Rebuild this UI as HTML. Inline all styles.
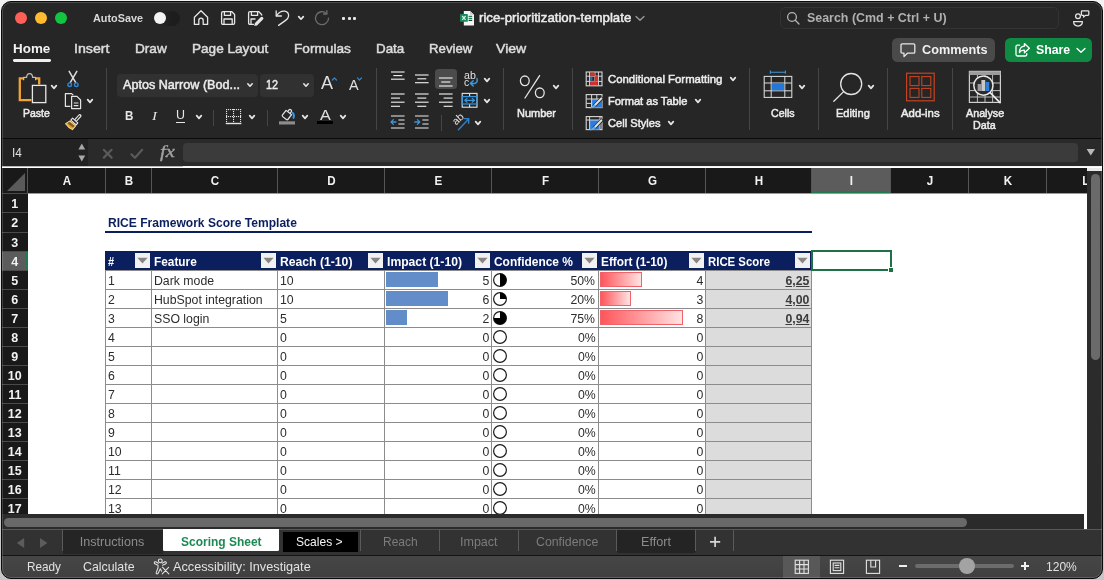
<!DOCTYPE html>
<html><head><meta charset="utf-8"><title>rice-prioritization-template</title>
<style>
*{box-sizing:border-box;margin:0;padding:0}
html,body{width:1104px;height:580px;overflow:hidden;background:linear-gradient(#f3f3f3,#c6c6c6);font-family:"Liberation Sans",sans-serif;}
#win{position:absolute;left:1px;top:1px;width:1102px;height:578px;border-radius:10px;background:#262626;overflow:hidden;border:1px solid #0a0a0a;}
#win:after{content:'';position:absolute;left:0;top:0;right:0;bottom:0;border-radius:9px;box-shadow:inset 0 0 0 1px rgba(255,255,255,.17);pointer-events:none}
#pg{position:absolute;left:-2px;top:-2px;width:1104px;height:580px;will-change:transform}
.abs{position:absolute}
.t{position:absolute;white-space:nowrap;color:#e9e9e9;line-height:1}
.ch{font-size:12.5px;font-weight:bold;margin-top:0.8px;margin-left:0.6px;transform:scaleX(.93);text-align:center;color:#f2f2f2}
.rh{left:2px;width:25.5px;text-align:center;font-size:12.5px;font-weight:bold;color:#f2f2f2}
.cell{font-size:13px;color:#2c2c2c;transform:scaleX(.945);transform-origin:0 50%}
.cell.r{transform-origin:100% 50%}
.cell.hd{color:#fff;font-weight:bold;transform:scaleX(.89)}
.fb{width:15px;height:14.5px;background:#f1f1f1}
.gl{background:#8c8c8c}
</style></head><body>
<div id="win"><div id="pg">
<div class="abs" style="left:15px;top:12px;width:12.4px;height:12.4px;border-radius:50%;background:#fe5f57"></div>
<div class="abs" style="left:35px;top:12px;width:12.4px;height:12.4px;border-radius:50%;background:#febc2e"></div>
<div class="abs" style="left:55px;top:12px;width:12.4px;height:12.4px;border-radius:50%;background:#12c440"></div>
<div class="t" style="left:93.0px;top:12.9px;font-size:11.5px;color:#d8d8d8;font-weight:bold;transform:scaleX(0.943);transform-origin:0 50%;">AutoSave</div>
<div class="abs" style="left:152.5px;top:11px;width:27px;height:14.5px;border-radius:8px;background:linear-gradient(90deg,rgba(28,28,28,0) 25%,#1d1d1d 75%)"></div>
<div class="abs" style="left:153.6px;top:12.1px;width:12.3px;height:12.3px;border-radius:50%;background:#f4f4f4"></div>
<svg class="abs" style="left:192px;top:8px" width="18" height="19" viewBox="0 0 18 19" fill="none" stroke="#e6e6e6" stroke-width="1.3" stroke-linejoin="round" stroke-linecap="round"><path d="M2.4,9.2 L9,2.8 L15.6,9.2 V16.4 H11.2 V12.4 Q11.2,10.2 9,10.2 Q6.8,10.2 6.8,12.4 V16.4 H2.4 Z"/></svg>
<svg class="abs" style="left:219px;top:8px" width="18" height="19" viewBox="0 0 18 19" fill="none" stroke="#e6e6e6" stroke-width="1.3" stroke-linejoin="round"><path d="M2.6,5 Q2.6,3.6 4,3.6 H12.6 L15.6,6.4 V15 Q15.6,16.4 14.2,16.4 H4 Q2.6,16.4 2.6,15 Z"/><path d="M5.4,3.8 V7.4 H11.6 V3.8"/><path d="M5,16.2 V11 H13.2 V16.2"/></svg>
<svg class="abs" style="left:246px;top:8px" width="19" height="19" viewBox="0 0 19 19" fill="none" stroke="#e6e6e6" stroke-width="1.3" stroke-linejoin="round"><path d="M8,16.4 H4 Q2.6,16.4 2.6,15 V5 Q2.6,3.6 4,3.6 H12.6 L15.6,6.4 V8"/><path d="M5.4,3.8 V7.4 H11.6 V3.8"/><path d="M5,16.2 V11 H9.5"/><path d="M10.6,15.6 L15.8,10.4" stroke="#262626" stroke-width="5.4" stroke-linecap="round"/><path d="M10.6,15.6 L15.8,10.4" stroke="#e6e6e6" stroke-width="3.2" stroke-linecap="round"/><path d="M8.2,18 L9,14.8 L11.4,17.2 Z" fill="#e6e6e6" stroke="none"/></svg>
<svg class="abs" style="left:273px;top:8px" width="19" height="19" viewBox="0 0 19 19" fill="none" stroke="#e6e6e6" stroke-width="1.3" stroke-linecap="round" stroke-linejoin="round"><path d="M3.2,3 V8 H8.4"/><path d="M3.4,7.8 Q7,2.6 11.8,3.2 Q15.8,4 15.6,8 Q15.4,10.4 12.6,12.4 L5.6,17.4"/></svg>
<svg class="abs" style="left:295.9px;top:14.4px" width="10" height="8" viewBox="0 0 10 8" fill="none" stroke="#e6e6e6" stroke-width="1.7" stroke-linecap="round" stroke-linejoin="round"><path d="M2.7,2.6 L5,5.2 L7.3,2.6"/></svg>
<svg class="abs" style="left:313px;top:9px" width="19" height="19" viewBox="0 0 19 19" fill="none" stroke="#6c6c6c" stroke-width="1.3" stroke-linecap="round" stroke-linejoin="round"><path d="M13.6,4.6 A6.5,6.5 0 1 0 15.5,9.2"/><path d="M13.9,1.6 V5 H10.5"/></svg>
<div class="abs" style="left:342.2px;top:16.7px;width:3px;height:3px;border-radius:1px;background:#e6e6e6"></div>
<div class="abs" style="left:347.5px;top:16.7px;width:3px;height:3px;border-radius:1px;background:#e6e6e6"></div>
<div class="abs" style="left:352.7px;top:16.7px;width:3px;height:3px;border-radius:1px;background:#e6e6e6"></div>
<svg class="abs" style="left:459px;top:10px" width="16" height="16" viewBox="0 0 16 16"><path d="M4.8,0.9 H11 L15,4.8 V15.4 H4.8 Z" fill="#f6f6f6"/><path d="M11,0.9 V4.8 H15 Z" fill="#cdcdcd"/><rect x="9.6" y="5.8" width="3.6" height="1.2" fill="#1a7d52"/><rect x="9.6" y="7.8" width="3.6" height="1.2" fill="#1a7d52"/><rect x="9.6" y="9.8" width="3.6" height="1.2" fill="#12402c"/><rect x="1" y="4" width="7.8" height="7.8" rx="0.6" fill="#17885a"/><path d="M3.2,6 L6.6,9.8 M6.6,6 L3.2,9.8" stroke="#d8f5e6" stroke-width="1.2"/></svg>
<div class="t" style="left:479.2px;top:10.8px;font-size:13px;color:#ececec;transform:scaleX(1.018);transform-origin:0 50%;-webkit-text-stroke:0.5px #ececec;">rice-prioritization-template</div>
<svg class="abs" style="left:634px;top:14px" width="12" height="9" viewBox="0 0 12 9" fill="none" stroke="#9a9a9a" stroke-width="1.4" stroke-linecap="round" stroke-linejoin="round"><path d="M2,2.6 L6,6.2 L10,2.6"/></svg>
<div class="abs" style="left:780.4px;top:7.4px;width:279px;height:22px;border-radius:5.5px;background:#272727;border:1px solid #343434"></div>
<svg class="abs" style="left:786px;top:10.5px" width="15" height="15" viewBox="0 0 15 15" fill="none" stroke="#b4b4b4" stroke-width="1.3" stroke-linecap="round"><circle cx="6" cy="6" r="4.4"/><path d="M9.3,9.3 L13,13"/></svg>
<div class="t" style="left:807.3px;top:12.4px;font-size:12px;color:#b0b0b0;font-weight:bold;transform:scaleX(1.036);transform-origin:0 50%;">Search (Cmd + Ctrl + U)</div>
<svg class="abs" style="left:1071px;top:9px" width="22" height="20" viewBox="0 0 22 20" fill="none" stroke="#e6e6e6" stroke-width="1.25" stroke-linejoin="round"><circle cx="7" cy="7.2" r="2.4"/><path d="M2.6,12.6 H11.4 Q11.4,17 7,17 Q2.6,17 2.6,12.6 Z"/><path d="M11.2,1.8 H17 Q17.8,1.8 17.8,2.6 V5.6 Q17.8,6.4 17,6.4 H14.4 L12.6,8 V6.4 H11.2 Q10.4,6.4 10.4,5.6 V2.6 Q10.4,1.8 11.2,1.8 Z"/></svg>
<div class="t" style="left:13.0px;top:41.6px;font-size:13.5px;color:#f2f2f2;font-weight:bold;transform:scaleX(0.994);transform-origin:0 50%;">Home</div>
<div class="t" style="left:74.0px;top:41.6px;font-size:13.5px;color:#dcdcdc;transform:scaleX(1.052);transform-origin:0 50%;-webkit-text-stroke:0.5px #dcdcdc;">Insert</div>
<div class="t" style="left:135.0px;top:41.6px;font-size:13.5px;color:#dcdcdc;transform:scaleX(1.009);transform-origin:0 50%;-webkit-text-stroke:0.5px #dcdcdc;">Draw</div>
<div class="t" style="left:191.5px;top:41.6px;font-size:13.5px;color:#dcdcdc;transform:scaleX(1.006);transform-origin:0 50%;-webkit-text-stroke:0.5px #dcdcdc;">Page Layout</div>
<div class="t" style="left:293.5px;top:41.6px;font-size:13.5px;color:#dcdcdc;transform:scaleX(1.010);transform-origin:0 50%;-webkit-text-stroke:0.5px #dcdcdc;">Formulas</div>
<div class="t" style="left:376.0px;top:41.6px;font-size:13.5px;color:#dcdcdc;transform:scaleX(0.992);transform-origin:0 50%;-webkit-text-stroke:0.5px #dcdcdc;">Data</div>
<div class="t" style="left:428.5px;top:41.6px;font-size:13.5px;color:#dcdcdc;transform:scaleX(0.978);transform-origin:0 50%;-webkit-text-stroke:0.5px #dcdcdc;">Review</div>
<div class="t" style="left:496.0px;top:41.6px;font-size:13.5px;color:#dcdcdc;transform:scaleX(1.044);transform-origin:0 50%;-webkit-text-stroke:0.5px #dcdcdc;">View</div>
<div class="abs" style="left:13px;top:59.2px;width:38px;height:2.8px;border-radius:1.4px;background:#f0f0f0"></div>
<div class="abs" style="left:892.2px;top:38px;width:102.8px;height:24px;border-radius:5.5px;background:#4a4a4a"></div>
<svg class="abs" style="left:899px;top:42px" width="18" height="17" viewBox="0 0 18 17" fill="none" stroke="#e6e6e6" stroke-width="1.3" stroke-linejoin="round"><path d="M3.2,1.8 H14.6 Q15.8,1.8 15.8,3 V10 Q15.8,11.2 14.6,11.2 H8.4 L5,14.6 V11.2 H3.2 Q2,11.2 2,10 V3 Q2,1.8 3.2,1.8 Z"/></svg>
<div class="t" style="left:922.0px;top:43.4px;font-size:13.5px;color:#f0f0f0;font-weight:bold;transform:scaleX(0.939);transform-origin:0 50%;">Comments</div>
<div class="abs" style="left:1005px;top:38px;width:87px;height:24px;border-radius:5.5px;background:#0f8a43"></div>
<svg class="abs" style="left:1013px;top:41px" width="19" height="18" viewBox="0 0 19 18" fill="none" stroke="#fff" stroke-width="1.3" stroke-linejoin="round" stroke-linecap="round"><path d="M6.6,4.2 H4.4 Q3,4.2 3,5.6 V13.6 Q3,15 4.4,15 H12.4 Q13.8,15 13.8,13.6 V12.6"/><path d="M11.4,2.6 L16.4,7.2 L11.4,11.8 V9.2 Q8,9 6.4,11.6 Q6.6,5.6 11.4,5.2 Z"/></svg>
<div class="t" style="left:1035.6px;top:43.4px;font-size:13.5px;color:#fff;font-weight:bold;transform:scaleX(0.912);transform-origin:0 50%;">Share</div>
<svg class="abs" style="left:1075px;top:46px" width="12" height="9" viewBox="0 0 12 9" fill="none" stroke="#fff" stroke-width="1.4" stroke-linecap="round" stroke-linejoin="round"><path d="M2,2.6 L6,6.2 L10,2.6"/></svg>
<svg class="abs" style="left:16px;top:70px" width="34" height="36" viewBox="0 0 34 36" fill="none" ><path d="M8.2,8.4 H3.8 V30.2 H15.4" stroke="#f0a338" stroke-width="2.3"/><path d="M19.4,8.4 H23.2 V14.6" stroke="#f0a338" stroke-width="2.3"/><path d="M7.6,10.2 V7.4 H10.6 Q10.8,3.6 13.6,3.6 Q16.4,3.6 16.6,7.4 H19.6 V10.2" stroke="#bdbdbd" stroke-width="1.2" stroke-linejoin="round"/><rect x="16.4" y="15.4" width="13.4" height="17.2" fill="#2b2b2b" stroke="#e8e8e8" stroke-width="1.3"/></svg>
<svg class="abs" style="left:48.1px;top:82.4px" width="12" height="10" viewBox="-6 -5 12 10" fill="none" stroke="#e4e4e4" stroke-width="1.75" stroke-linecap="round" stroke-linejoin="round"><path d="M-2.3,-1.35 L0,1.35 L2.3,-1.35"/></svg>
<div class="t" style="left:22.6px;top:107.7px;font-size:11px;color:#ececec;transform:scaleX(0.953);transform-origin:0 50%;-webkit-text-stroke:0.5px #ececec;">Paste</div>
<svg class="abs" style="left:64px;top:69px" width="18" height="20" viewBox="0 0 18 20" fill="none" ><path d="M5.2,2.4 L11.6,13.4 M12.8,2.4 L6.4,13.4" stroke="#dedede" stroke-width="1.5" stroke-linecap="round"/><circle cx="5.7" cy="15.7" r="1.8" stroke="#2f86d2" stroke-width="1.4"/><circle cx="12.3" cy="15.7" r="1.8" stroke="#2f86d2" stroke-width="1.4"/></svg>
<svg class="abs" style="left:63px;top:91px" width="20" height="20" viewBox="0 0 20 20" fill="none" ><path d="M7.4,15.4 H2.4 V2.6 H8.6 L10.2,4.2" stroke="#e4e4e4" stroke-width="1.2" stroke-linejoin="round"/><path d="M8.6,5.4 H14 L17.6,9 V17.6 H8.6 Z" stroke="#e4e4e4" stroke-width="1.2" stroke-linejoin="round" fill="#2b2b2b"/><path d="M10.8,12 H15.4 M10.8,14.6 H15.4" stroke="#e4e4e4" stroke-width="1.1"/></svg>
<svg class="abs" style="left:84px;top:96.4px" width="12" height="10" viewBox="-6 -5 12 10" fill="none" stroke="#e4e4e4" stroke-width="1.75" stroke-linecap="round" stroke-linejoin="round"><path d="M-2.3,-1.35 L0,1.35 L2.3,-1.35"/></svg>
<svg class="abs" style="left:63px;top:113px" width="20" height="18" viewBox="0 0 20 18" fill="none" ><path d="M12.8,7.2 L16.8,2.8" stroke="#ececec" stroke-width="3.4" stroke-linecap="round"/><path d="M12.9,7.1 L16.7,2.9" stroke="#2a2a2a" stroke-width="1.2" stroke-linecap="round"/><path d="M9.6,5.2 L14.8,9.8 L13.2,11.8 L7.8,7.2 Z" fill="#2a2a2a" stroke="#ececec" stroke-width="1.1" stroke-linejoin="round"/><path d="M7,8 L12.6,12.8 L9.4,16.6 Q5.4,14.6 2.6,10.6 Z" fill="#e39a2c" stroke="#f7d683" stroke-width="1.1" stroke-linejoin="round"/><path d="M6.6,8.8 L11.6,13 L10.2,14.4 Q7,12.6 4.4,9.9 Z" fill="#2a2a2a" opacity=".55"/></svg>
<div class="abs" style="left:106.0px;top:68px;width:1px;height:62px;background:#454545"></div>
<div class="abs" style="left:117px;top:73.5px;width:140.5px;height:23px;border-radius:4px;background:#313131"></div>
<div class="t" style="left:123.0px;top:78.0px;font-size:13px;color:#ececec;transform:scaleX(0.970);transform-origin:0 50%;-webkit-text-stroke:0.5px #ececec;">Aptos Narrow (Bod...</div>
<svg class="abs" style="left:244.3px;top:80.4px" width="12" height="10" viewBox="-6 -5 12 10" fill="none" stroke="#e4e4e4" stroke-width="1.6" stroke-linecap="round" stroke-linejoin="round"><path d="M-2.2,-1.25 L0,1.25 L2.2,-1.25"/></svg>
<div class="abs" style="left:260px;top:73.5px;width:54px;height:23px;border-radius:4px;background:#313131"></div>
<div class="t" style="left:266.0px;top:78.0px;font-size:13px;color:#ececec;transform:scaleX(0.830);transform-origin:0 50%;-webkit-text-stroke:0.5px #ececec;">12</div>
<svg class="abs" style="left:300.4px;top:80.4px" width="12" height="10" viewBox="-6 -5 12 10" fill="none" stroke="#e4e4e4" stroke-width="1.6" stroke-linecap="round" stroke-linejoin="round"><path d="M-2.2,-1.25 L0,1.25 L2.2,-1.25"/></svg>
<div class="t" style="left:320.6px;top:75.4px;font-size:17.5px;color:#e0e0e0;transform:scaleX(1.028);transform-origin:0 50%;">A</div>
<svg class="abs" style="left:330.6px;top:76.4px" width="8" height="6" viewBox="0 0 8 6" fill="none" ><path d="M1.4,4 L3.4,1.9 L5.4,4" stroke="#2f86d0" stroke-width="1.3" stroke-linecap="round" stroke-linejoin="round"/></svg>
<div class="t" style="left:348.6px;top:77.9px;font-size:14.5px;color:#e0e0e0;transform:scaleX(0.993);transform-origin:0 50%;">A</div>
<svg class="abs" style="left:356px;top:76.4px" width="8" height="6" viewBox="0 0 8 6" fill="none" ><path d="M1.4,1.9 L3.5,4 L5.6,1.9" stroke="#2f86d0" stroke-width="1.3" stroke-linecap="round" stroke-linejoin="round"/></svg>
<div class="t" style="left:125.0px;top:109.2px;font-size:13.5px;color:#e6e6e6;font-weight:bold;transform:scaleX(0.862);transform-origin:0 50%;">B</div>
<div class="t" style="left:152.4px;top:109.3px;font-size:13.5px;color:#e6e6e6;font-style:italic;font-family:'Liberation Serif',serif;transform:scaleX(1.112);transform-origin:0 50%;">I</div>
<div class="t" style="left:176.0px;top:109.0px;font-size:12.5px;color:#e6e6e6;transform:scaleX(0.997);transform-origin:0 50%;">U</div>
<div class="abs" style="left:176px;top:121.6px;width:9.4px;height:1.1px;background:#e6e6e6"></div>
<svg class="abs" style="left:193px;top:112.4px" width="12" height="10" viewBox="-6 -5 12 10" fill="none" stroke="#e4e4e4" stroke-width="1.75" stroke-linecap="round" stroke-linejoin="round"><path d="M-2.3,-1.35 L0,1.35 L2.3,-1.35"/></svg>
<div class="abs" style="left:213.1px;top:110px;width:1px;height:16px;background:#454545"></div>
<svg class="abs" style="left:225px;top:108px" width="18" height="18" viewBox="0 0 18 18" fill="none" ><g fill="#e4e4e4"><rect x="1" y="1" width="1.1" height="1.1"/><rect x="1" y="8" width="1.1" height="1.1"/><rect x="3" y="1" width="1.1" height="1.1"/><rect x="3" y="8" width="1.1" height="1.1"/><rect x="5" y="1" width="1.1" height="1.1"/><rect x="5" y="8" width="1.1" height="1.1"/><rect x="7" y="1" width="1.1" height="1.1"/><rect x="7" y="8" width="1.1" height="1.1"/><rect x="9" y="1" width="1.1" height="1.1"/><rect x="9" y="8" width="1.1" height="1.1"/><rect x="11" y="1" width="1.1" height="1.1"/><rect x="11" y="8" width="1.1" height="1.1"/><rect x="13" y="1" width="1.1" height="1.1"/><rect x="13" y="8" width="1.1" height="1.1"/><rect x="15" y="1" width="1.1" height="1.1"/><rect x="15" y="8" width="1.1" height="1.1"/><rect x="1" y="1" width="1.1" height="1.1"/><rect x="8" y="1" width="1.1" height="1.1"/><rect x="15" y="1" width="1.1" height="1.1"/><rect x="1" y="3" width="1.1" height="1.1"/><rect x="8" y="3" width="1.1" height="1.1"/><rect x="15" y="3" width="1.1" height="1.1"/><rect x="1" y="5" width="1.1" height="1.1"/><rect x="8" y="5" width="1.1" height="1.1"/><rect x="15" y="5" width="1.1" height="1.1"/><rect x="1" y="7" width="1.1" height="1.1"/><rect x="8" y="7" width="1.1" height="1.1"/><rect x="15" y="7" width="1.1" height="1.1"/><rect x="1" y="9" width="1.1" height="1.1"/><rect x="8" y="9" width="1.1" height="1.1"/><rect x="15" y="9" width="1.1" height="1.1"/><rect x="1" y="11" width="1.1" height="1.1"/><rect x="8" y="11" width="1.1" height="1.1"/><rect x="15" y="11" width="1.1" height="1.1"/><rect x="1" y="13" width="1.1" height="1.1"/><rect x="8" y="13" width="1.1" height="1.1"/><rect x="15" y="13" width="1.1" height="1.1"/><rect x="0.8" y="14.8" width="15.6" height="1.4"/></g></svg>
<svg class="abs" style="left:246px;top:112.4px" width="12" height="10" viewBox="-6 -5 12 10" fill="none" stroke="#e4e4e4" stroke-width="1.75" stroke-linecap="round" stroke-linejoin="round"><path d="M-2.3,-1.35 L0,1.35 L2.3,-1.35"/></svg>
<div class="abs" style="left:266.7px;top:110px;width:1px;height:16px;background:#454545"></div>
<svg class="abs" style="left:278px;top:107px" width="20" height="19" viewBox="0 0 20 19" fill="none" ><g transform="rotate(38 9.2 7.8)" stroke="#e4e4e4" stroke-width="1.25" stroke-linejoin="round"><path d="M5.6,5 H12.6 V10.8 Q12.6,12 11.4,12 H6.8 Q5.6,12 5.6,10.8 Z"/><path d="M7.6,5 V3.2 Q7.6,1.6 9.1,1.6 Q10.6,1.6 10.6,3.2 V5"/></g><path d="M14.6,5.6 Q17,8 15.4,11" stroke="#3a96dd" stroke-width="1.8" stroke-linecap="round"/><rect x="1" y="14.3" width="16" height="3.2" fill="#8c8c8c"/></svg>
<svg class="abs" style="left:299px;top:112.4px" width="12" height="10" viewBox="-6 -5 12 10" fill="none" stroke="#e4e4e4" stroke-width="1.75" stroke-linecap="round" stroke-linejoin="round"><path d="M-2.3,-1.35 L0,1.35 L2.3,-1.35"/></svg>
<div class="t" style="left:320.0px;top:107.3px;font-size:15px;color:#e0e0e0;transform:scaleX(1.079);transform-origin:0 50%;">A</div>
<div class="abs" style="left:317px;top:121.1px;width:15.9px;height:3.3px;background:#000"></div>
<svg class="abs" style="left:337px;top:112.4px" width="12" height="10" viewBox="-6 -5 12 10" fill="none" stroke="#e4e4e4" stroke-width="1.75" stroke-linecap="round" stroke-linejoin="round"><path d="M-2.3,-1.35 L0,1.35 L2.3,-1.35"/></svg>
<div class="abs" style="left:376.1px;top:68px;width:1px;height:62px;background:#454545"></div>
<div class="abs" style="left:435px;top:69px;width:22px;height:19.6px;border-radius:3.5px;background:#4b4b4b"></div>
<svg class="abs" style="left:390.3px;top:71.2px" width="15.6" height="12.8" viewBox="0 0 15.6 12.8" fill="none" ><path d="M1.0,1.0 h13.6" stroke="#ececec" stroke-width="1.15"/><path d="M3.3,4.6 h9" stroke="#ececec" stroke-width="1.15"/><path d="M1.0,8.2 h13.6" stroke="#ececec" stroke-width="1.15"/></svg>
<svg class="abs" style="left:414.2px;top:73.6px" width="15.6" height="13.55" viewBox="0 0 15.6 13.55" fill="none" ><path d="M1.0,1.0 h13.6" stroke="#ececec" stroke-width="1.15"/><path d="M3.3,4.8 h9" stroke="#ececec" stroke-width="1.15"/><path d="M1.0,8.7 h13.6" stroke="#ececec" stroke-width="1.15"/></svg>
<svg class="abs" style="left:438.2px;top:77.3px" width="15.6" height="14.0" viewBox="0 0 15.6 14.0" fill="none" ><path d="M1.0,1.0 h13.6" stroke="#ececec" stroke-width="1.15"/><path d="M3.3,5.0 h9" stroke="#ececec" stroke-width="1.15"/><path d="M1.0,9.0 h13.6" stroke="#ececec" stroke-width="1.15"/></svg>
<svg class="abs" style="left:390.2px;top:93.3px" width="15.6" height="18.4" viewBox="0 0 15.6 18.4" fill="none" ><path d="M1.0,1.0 h13.6" stroke="#ececec" stroke-width="1.15"/><path d="M1.0,5.1 h9" stroke="#ececec" stroke-width="1.15"/><path d="M1.0,9.2 h13.6" stroke="#ececec" stroke-width="1.15"/><path d="M1.0,13.3 h9" stroke="#ececec" stroke-width="1.15"/></svg>
<svg class="abs" style="left:414.2px;top:93.3px" width="15.6" height="18.4" viewBox="0 0 15.6 18.4" fill="none" ><path d="M1.0,1.0 h13.6" stroke="#ececec" stroke-width="1.15"/><path d="M3.3,5.1 h9" stroke="#ececec" stroke-width="1.15"/><path d="M1.0,9.2 h13.6" stroke="#ececec" stroke-width="1.15"/><path d="M3.3,13.3 h9" stroke="#ececec" stroke-width="1.15"/></svg>
<svg class="abs" style="left:438.2px;top:93.3px" width="15.6" height="18.4" viewBox="0 0 15.6 18.4" fill="none" ><path d="M1.0,1.0 h13.6" stroke="#ececec" stroke-width="1.15"/><path d="M5.6,5.1 h9" stroke="#ececec" stroke-width="1.15"/><path d="M1.0,9.2 h13.6" stroke="#ececec" stroke-width="1.15"/><path d="M5.6,13.3 h9" stroke="#ececec" stroke-width="1.15"/></svg>
<svg class="abs" style="left:390.3px;top:115.4px" width="16" height="15" viewBox="0 0 16 15" fill="none" ><path d="M1,1 h13.6 M8.4,5 h6.2 M8.4,9 h6.2 M1,13 h13.6" stroke="#ececec" stroke-width="1.15"/><path d="M6,7 H1.2 M3.4,4.6 L1,7 L3.4,9.4" stroke="#3a96dd" stroke-width="1.3" stroke-linecap="round" stroke-linejoin="round"/></svg>
<svg class="abs" style="left:414.2px;top:115.4px" width="16" height="15" viewBox="0 0 16 15" fill="none" ><path d="M1,1 h13.6 M8.4,5 h6.2 M8.4,9 h6.2 M1,13 h13.6" stroke="#ececec" stroke-width="1.15"/><path d="M0.8,7 H5.6 M3.4,4.6 L5.8,7 L3.4,9.4" stroke="#3a96dd" stroke-width="1.3" stroke-linecap="round" stroke-linejoin="round"/></svg>
<div class="abs" style="left:441.1px;top:114.5px;width:1px;height:16.5px;background:#454545"></div>
<div class="t" style="left:464.2px;top:70.0px;font-size:10.5px;color:#e0e0e0;transform:scaleX(1.010);transform-origin:0 50%;">ab</div>
<div class="t" style="left:464.2px;top:76.7px;font-size:10.5px;color:#e0e0e0;transform:scaleX(0.990);transform-origin:0 50%;">c</div>
<svg class="abs" style="left:468px;top:77px" width="12" height="11" viewBox="0 0 12 11" fill="none" ><path d="M9,1.6 Q10,5.6 6.6,6.4 H2.6 M5.2,3.8 L2.4,6.4 L5.2,9" stroke="#3a96dd" stroke-width="1.5" stroke-linecap="round" stroke-linejoin="round"/></svg>
<svg class="abs" style="left:481px;top:74.6px" width="12" height="10" viewBox="-6 -5 12 10" fill="none" stroke="#e4e4e4" stroke-width="1.75" stroke-linecap="round" stroke-linejoin="round"><path d="M-2.3,-1.35 L0,1.35 L2.3,-1.35"/></svg>
<svg class="abs" style="left:461px;top:92px" width="18" height="17" viewBox="0 0 18 17" fill="none" ><rect x="1.2" y="1.4" width="14.8" height="13.8" stroke="#e4e4e4" stroke-width="1.1"/><path d="M8.6,1.4 V4.6 M8.6,12 V15.2" stroke="#e4e4e4" stroke-width="1.1"/><rect x="1.2" y="4.6" width="14.8" height="7.4" stroke="#3a96dd" stroke-width="1.2"/><path d="M4,8.3 H13.2 M6,6.4 L3.8,8.3 L6,10.2 M11.2,6.4 L13.4,8.3 L11.2,10.2" stroke="#3a96dd" stroke-width="1.2" stroke-linecap="round" stroke-linejoin="round"/></svg>
<svg class="abs" style="left:481px;top:96.3px" width="12" height="10" viewBox="-6 -5 12 10" fill="none" stroke="#e4e4e4" stroke-width="1.75" stroke-linecap="round" stroke-linejoin="round"><path d="M-2.3,-1.35 L0,1.35 L2.3,-1.35"/></svg>
<div class="t" style="left:457px;top:116px;font-size:10.5px;color:#e0e0e0;transform:rotate(-42deg);transform-origin:0 100%">ab</div>
<svg class="abs" style="left:453px;top:114px" width="20" height="18" viewBox="0 0 20 18" fill="none" ><path d="M5.4,15.8 L15.4,5.2 M11.4,4.6 L15.8,4.8 L15.6,9.2" stroke="#2f80c8" stroke-width="1.4" stroke-linecap="round" stroke-linejoin="round"/></svg>
<svg class="abs" style="left:472px;top:118.3px" width="12" height="10" viewBox="-6 -5 12 10" fill="none" stroke="#e4e4e4" stroke-width="1.75" stroke-linecap="round" stroke-linejoin="round"><path d="M-2.3,-1.35 L0,1.35 L2.3,-1.35"/></svg>
<div class="abs" style="left:503.3px;top:68px;width:1px;height:62px;background:#454545"></div>
<svg class="abs" style="left:518px;top:73px" width="30" height="28" viewBox="0 0 30 28" fill="none" ><ellipse cx="6.8" cy="7.8" rx="4.4" ry="4.8" stroke="#e4e4e4" stroke-width="1.3"/><ellipse cx="21.8" cy="19.8" rx="4.4" ry="4.8" stroke="#e4e4e4" stroke-width="1.3"/><path d="M21.6,2.6 L7,25" stroke="#e4e4e4" stroke-width="1.3" stroke-linecap="round"/></svg>
<svg class="abs" style="left:550.2px;top:82.4px" width="12" height="10" viewBox="-6 -5 12 10" fill="none" stroke="#e4e4e4" stroke-width="1.75" stroke-linecap="round" stroke-linejoin="round"><path d="M-2.3,-1.35 L0,1.35 L2.3,-1.35"/></svg>
<div class="t" style="left:517.4px;top:107.7px;font-size:11px;color:#ececec;transform:scaleX(0.997);transform-origin:0 50%;-webkit-text-stroke:0.5px #ececec;">Number</div>
<div class="abs" style="left:572.1px;top:68px;width:1px;height:62px;background:#454545"></div>
<svg class="abs" style="left:585px;top:71px" width="18" height="16" viewBox="0 0 18 16" fill="none" ><rect x="1.2" y="1" width="15.8" height="13.8" stroke="#d8d8d8" stroke-width="1.1"/><path d="M1.2,5.2 H17 M1.2,10.4 H17 M4.6,1 V14.8 M9.9,1 V14.8 M13.4,1 V14.8" stroke="#d8d8d8" stroke-width="1"/><rect x="5.2" y="1.6" width="4.6" height="3.6" fill="#d3302c"/><rect x="9.6" y="5.2" width="3.4" height="5.2" fill="#d3302c"/><rect x="5.2" y="10.4" width="7.4" height="3.8" fill="#d3302c"/><rect x="5.2" y="5.8" width="2.2" height="4" fill="#2a6fb8"/></svg>
<div class="t" style="left:608.2px;top:74.0px;font-size:11px;color:#ececec;transform:scaleX(1.034);transform-origin:0 50%;-webkit-text-stroke:0.5px #ececec;">Conditional Formatting</div>
<svg class="abs" style="left:727px;top:74.4px" width="12" height="10" viewBox="-6 -5 12 10" fill="none" stroke="#e4e4e4" stroke-width="1.75" stroke-linecap="round" stroke-linejoin="round"><path d="M-2.3,-1.35 L0,1.35 L2.3,-1.35"/></svg>
<svg class="abs" style="left:585px;top:93.2px" width="18" height="17" viewBox="0 0 18 17" fill="none" ><rect x="1.2" y="1.6" width="15.8" height="13" stroke="#d8d8d8" stroke-width="1.1"/><rect x="6.6" y="6" width="10.4" height="8.6" fill="#2a7fdc"/><path d="M1.2,6 H17 M1.2,10.4 H6.6 M6.6,1.6 V14.6 M11.8,1.6 V6" stroke="#d8d8d8" stroke-width="1"/><path d="M16.6,5.4 L9.6,12.4" stroke="#2b2b2b" stroke-width="3.6" stroke-linecap="round"/><path d="M16.4,5.4 L9.8,12.2" stroke="#e4e4e4" stroke-width="2" stroke-linecap="round"/><path d="M9.4,11 L11.2,12.8 Q8,15.8 4.6,15.2 Q7.6,13.6 9.4,11 Z" fill="#6aa9e8"/></svg>
<div class="t" style="left:608.2px;top:96.0px;font-size:11px;color:#ececec;transform:scaleX(1.009);transform-origin:0 50%;-webkit-text-stroke:0.5px #ececec;">Format as Table</div>
<svg class="abs" style="left:692px;top:96.4px" width="12" height="10" viewBox="-6 -5 12 10" fill="none" stroke="#e4e4e4" stroke-width="1.75" stroke-linecap="round" stroke-linejoin="round"><path d="M-2.3,-1.35 L0,1.35 L2.3,-1.35"/></svg>
<svg class="abs" style="left:585px;top:115px" width="18" height="17" viewBox="0 0 18 17" fill="none" ><rect x="1.2" y="1.6" width="15.8" height="13" stroke="#d8d8d8" stroke-width="1.1"/><rect x="4.6" y="5" width="10.4" height="9.6" fill="#2a7fdc"/><path d="M1.2,5 H17 M4.6,1.6 V14.6 M15,1.6 V14.6" stroke="#d8d8d8" stroke-width="1"/><path d="M16.6,5.4 L9.6,12.4" stroke="#2b2b2b" stroke-width="3.6" stroke-linecap="round"/><path d="M16.4,5.4 L9.8,12.2" stroke="#e4e4e4" stroke-width="2" stroke-linecap="round"/><path d="M9.4,11 L11.2,12.8 Q8,15.8 4.6,15.2 Q7.6,13.6 9.4,11 Z" fill="#6aa9e8"/></svg>
<div class="t" style="left:608.2px;top:117.7px;font-size:11px;color:#ececec;transform:scaleX(1.012);transform-origin:0 50%;-webkit-text-stroke:0.5px #ececec;">Cell Styles</div>
<svg class="abs" style="left:665.2px;top:118.4px" width="12" height="10" viewBox="-6 -5 12 10" fill="none" stroke="#e4e4e4" stroke-width="1.75" stroke-linecap="round" stroke-linejoin="round"><path d="M-2.3,-1.35 L0,1.35 L2.3,-1.35"/></svg>
<div class="abs" style="left:749.1px;top:68px;width:1px;height:62px;background:#454545"></div>
<svg class="abs" style="left:762px;top:70px" width="32" height="30" viewBox="0 0 32 30" fill="none" ><path d="M8.4,2.2 H23.4 M8.4,0.6 V3.8 M23.4,0.6 V3.8" stroke="#3a96dd" stroke-width="1.1"/><rect x="2.2" y="6.4" width="27.6" height="21" stroke="#dcdcdc" stroke-width="1.05"/><path d="M2.2,13 H29.8 M2.2,20.8 H29.8 M9.2,6.4 V27.4 M22.8,6.4 V27.4" stroke="#dcdcdc" stroke-width="1"/><rect x="9.9" y="13.6" width="12.2" height="6.7" fill="#2277d8"/></svg>
<svg class="abs" style="left:796px;top:82.4px" width="12" height="10" viewBox="-6 -5 12 10" fill="none" stroke="#e4e4e4" stroke-width="1.75" stroke-linecap="round" stroke-linejoin="round"><path d="M-2.3,-1.35 L0,1.35 L2.3,-1.35"/></svg>
<div class="t" style="left:771.4px;top:107.7px;font-size:11px;color:#ececec;transform:scaleX(0.965);transform-origin:0 50%;-webkit-text-stroke:0.5px #ececec;">Cells</div>
<div class="abs" style="left:817.7px;top:68px;width:1px;height:62px;background:#454545"></div>
<svg class="abs" style="left:830.5px;top:69.5px" width="34" height="34" viewBox="0 0 34 34" fill="none" ><circle cx="20.2" cy="14" r="10.5" stroke="#e4e4e4" stroke-width="1.3"/><path d="M12.6,21.6 L2.8,31.2" stroke="#e4e4e4" stroke-width="1.3" stroke-linecap="round"/></svg>
<svg class="abs" style="left:864.8px;top:82.4px" width="12" height="10" viewBox="-6 -5 12 10" fill="none" stroke="#e4e4e4" stroke-width="1.75" stroke-linecap="round" stroke-linejoin="round"><path d="M-2.3,-1.35 L0,1.35 L2.3,-1.35"/></svg>
<div class="t" style="left:835.8px;top:107.7px;font-size:11px;color:#ececec;transform:scaleX(1.005);transform-origin:0 50%;-webkit-text-stroke:0.5px #ececec;">Editing</div>
<div class="abs" style="left:887.1px;top:68px;width:1px;height:62px;background:#454545"></div>
<svg class="abs" style="left:904px;top:71px" width="32" height="32" viewBox="0 0 32 32" fill="none" ><rect x="2.6" y="2.2" width="27.6" height="27.6" stroke="#cc4420" stroke-width="1.15"/><rect x="6" y="5.6" width="9" height="9" stroke="#cc4420" stroke-width="1.05"/><rect x="17.8" y="5.6" width="9" height="9" stroke="#cc4420" stroke-width="1.05"/><rect x="6" y="17.4" width="9" height="9" stroke="#cc4420" stroke-width="1.05"/><rect x="17.8" y="17.4" width="9" height="9" stroke="#cc4420" stroke-width="1.05"/></svg>
<div class="t" style="left:900.8px;top:107.7px;font-size:11px;color:#ececec;transform:scaleX(1.035);transform-origin:0 50%;-webkit-text-stroke:0.5px #ececec;">Add-ins</div>
<div class="abs" style="left:952.1px;top:68px;width:1px;height:62px;background:#454545"></div>
<svg class="abs" style="left:967px;top:69px" width="36" height="36" viewBox="0 0 36 36" fill="none" ><rect x="2.4" y="2.4" width="31" height="31" stroke="#cfcfcf" stroke-width="1.2"/><rect x="2.4" y="2.4" width="31" height="3.6" fill="#9c9c9c"/><path d="M2.4,14 H33.4 M2.4,21.6 H33.4 M2.4,28 H33.4 M10.4,6 V33 M18,6 V33 M25.6,6 V33" stroke="#bdbdbd" stroke-width="1"/><circle cx="16.4" cy="16.6" r="9.6" fill="#2b2b2b" stroke="#e8e8e8" stroke-width="1.5"/><rect x="10.6" y="15" width="3.6" height="7" fill="#9a9a9a"/><rect x="14.4" y="11" width="3.8" height="11" fill="#c8c8c8"/><rect x="18.4" y="13" width="3.8" height="9" fill="#2f7fd6"/><path d="M23.4,23.8 L33,33.6" stroke="#e8e8e8" stroke-width="1.8" stroke-linecap="round"/></svg>
<div class="t" style="left:965.6px;top:107.7px;font-size:11px;color:#ececec;transform:scaleX(0.976);transform-origin:0 50%;-webkit-text-stroke:0.5px #ececec;">Analyse</div>
<div class="t" style="left:973.0px;top:119.7px;font-size:11px;color:#ececec;transform:scaleX(0.973);transform-origin:0 50%;-webkit-text-stroke:0.5px #ececec;">Data</div>
<div class="abs" style="left:2px;top:138px;width:1100px;height:1.2px;background:#0a0a0a"></div>
<div class="abs" style="left:2px;top:139.2px;width:1100px;height:27px;background:#2a2a2a"></div>
<div class="abs" style="left:2px;top:139.2px;width:86px;height:27px;background:#222"></div>
<div class="t" style="left:12.2px;top:145.8px;font-size:13px;color:#e0e0e0;transform:scaleX(0.904);transform-origin:0 50%;">I4</div>
<svg class="abs" style="left:77px;top:142px" width="10" height="21" viewBox="0 0 10 21"><polygon points="1.4,7.4 8.2,7.4 4.8,1.4" fill="#a8a8a8"/><polygon points="1.4,13.4 8.2,13.4 4.8,19.4" fill="#a8a8a8"/></svg>
<svg class="abs" style="left:101px;top:147px" width="14" height="14" viewBox="0 0 14 14" fill="none" stroke="#5a5a5a" stroke-width="2.2" stroke-linecap="round"><path d="M2.8,2.8 L10.6,10.6 M10.6,2.8 L2.8,10.6"/></svg>
<svg class="abs" style="left:129px;top:147px" width="16" height="14" viewBox="0 0 16 14" fill="none" stroke="#5a5a5a" stroke-width="2.2" stroke-linecap="round" stroke-linejoin="round"><path d="M2.4,7.4 L6,10.8 L13.2,2.8"/></svg>
<div class="t" style="left:160.4px;top:144.2px;font-size:16.5px;color:#a2a2a2;font-style:italic;font-family:'Liberation Serif',serif;transform:scaleX(1.243);transform-origin:0 50%;-webkit-text-stroke:0.35px #a2a2a2;">fx</div>
<div class="abs" style="left:182.6px;top:143px;width:895px;height:18.6px;border-radius:4px;background:#3b3b3b"></div>
<svg class="abs" style="left:1084.6px;top:147.2px" width="12" height="10" viewBox="0 0 12 10"><polygon points="1.6,2 10,2 5.8,8.4" fill="#b9b9b9"/></svg>
<div class="abs" style="left:2px;top:165.7px;width:1100px;height:1.9px;background:#b8b8b8"></div>
<div class="abs" style="left:183px;top:165.7px;width:920px;height:1.9px;background:#f4f4f4"></div>
<div class="abs" style="left:2px;top:167px;width:1100px;height:347px;background:#fff;overflow:hidden" id="grid">
<div class="abs" style="left:-2px;top:-167px;width:1104px;height:580px">
<div class="abs" style="left:2px;top:167.5px;width:1086px;height:25.6px;background:#191919"></div>
<div class="abs" style="left:812.3px;top:167.5px;width:78.4px;height:25.6px;background:#5c5c5c;border-bottom:2px solid #1e7b4c"></div>
<div class="abs" style="left:104.9px;top:167.5px;width:1.2px;height:25.6px;background:#555"></div>
<div class="t ch" style="left:27.5px;width:78.0px;top:174px">A</div>
<div class="abs" style="left:150.9px;top:167.5px;width:1.2px;height:25.6px;background:#555"></div>
<div class="t ch" style="left:105.5px;width:46.0px;top:174px">B</div>
<div class="abs" style="left:276.9px;top:167.5px;width:1.2px;height:25.6px;background:#555"></div>
<div class="t ch" style="left:151.5px;width:126.0px;top:174px">C</div>
<div class="abs" style="left:383.9px;top:167.5px;width:1.2px;height:25.6px;background:#555"></div>
<div class="t ch" style="left:277.5px;width:107.0px;top:174px">D</div>
<div class="abs" style="left:490.9px;top:167.5px;width:1.2px;height:25.6px;background:#555"></div>
<div class="t ch" style="left:384.5px;width:107.0px;top:174px">E</div>
<div class="abs" style="left:597.9px;top:167.5px;width:1.2px;height:25.6px;background:#555"></div>
<div class="t ch" style="left:491.5px;width:107.0px;top:174px">F</div>
<div class="abs" style="left:704.9px;top:167.5px;width:1.2px;height:25.6px;background:#555"></div>
<div class="t ch" style="left:598.5px;width:107.0px;top:174px">G</div>
<div class="abs" style="left:810.9px;top:167.5px;width:1.2px;height:25.6px;background:#555"></div>
<div class="t ch" style="left:705.5px;width:106.0px;top:174px">H</div>
<div class="abs" style="left:889.9px;top:167.5px;width:1.2px;height:25.6px;background:#555"></div>
<div class="t ch" style="left:811.5px;width:79.0px;top:174px">I</div>
<div class="abs" style="left:967.9px;top:167.5px;width:1.2px;height:25.6px;background:#555"></div>
<div class="t ch" style="left:890.5px;width:78.0px;top:174px">J</div>
<div class="abs" style="left:1045.9px;top:167.5px;width:1.2px;height:25.6px;background:#555"></div>
<div class="t ch" style="left:968.5px;width:78.0px;top:174px">K</div>
<div class="abs" style="left:1123.4px;top:167.5px;width:1.2px;height:25.6px;background:#555"></div>
<div class="t ch" style="left:1046.5px;width:77.5px;top:174px">L</div>
<div class="abs" style="left:2px;top:167.5px;width:25.5px;height:25.6px;background:#191919"></div>
<svg class="abs" style="left:2px;top:167.5px" width="26" height="26"><polygon points="5,23 23,23 23,5" fill="#5a5a5a"/></svg>
<div class="abs" style="left:26.9px;top:167.5px;width:1.2px;height:25.6px;background:#555"></div>
<div class="abs" style="left:2px;top:192.7px;width:1086px;height:1.2px;background:#9a9a9a"></div>
<div class="abs" style="left:2px;top:193.6px;width:25.5px;height:321px;background:#191919"></div>
<div class="abs" style="left:2px;top:251px;width:25.5px;height:19px;background:#5c5c5c;border-right:2px solid #1e7b4c"></div>
<div class="abs" style="left:2px;top:193.00px;width:25.5px;height:1px;background:#4a4a4a"></div>
<div class="t rh" style="top:198.10px">1</div>
<div class="abs" style="left:2px;top:212.00px;width:25.5px;height:1px;background:#4a4a4a"></div>
<div class="t rh" style="top:217.10px">2</div>
<div class="abs" style="left:2px;top:231.50px;width:25.5px;height:1px;background:#4a4a4a"></div>
<div class="t rh" style="top:236.60px">3</div>
<div class="abs" style="left:2px;top:250.50px;width:25.5px;height:1px;background:#4a4a4a"></div>
<div class="t rh" style="top:255.60px">4</div>
<div class="abs" style="left:2px;top:269.50px;width:25.5px;height:1px;background:#4a4a4a"></div>
<div class="t rh" style="top:274.60px">5</div>
<div class="abs" style="left:2px;top:288.50px;width:25.5px;height:1px;background:#4a4a4a"></div>
<div class="t rh" style="top:293.60px">6</div>
<div class="abs" style="left:2px;top:307.50px;width:25.5px;height:1px;background:#4a4a4a"></div>
<div class="t rh" style="top:312.60px">7</div>
<div class="abs" style="left:2px;top:326.50px;width:25.5px;height:1px;background:#4a4a4a"></div>
<div class="t rh" style="top:331.60px">8</div>
<div class="abs" style="left:2px;top:345.50px;width:25.5px;height:1px;background:#4a4a4a"></div>
<div class="t rh" style="top:350.60px">9</div>
<div class="abs" style="left:2px;top:364.50px;width:25.5px;height:1px;background:#4a4a4a"></div>
<div class="t rh" style="top:369.60px">10</div>
<div class="abs" style="left:2px;top:383.50px;width:25.5px;height:1px;background:#4a4a4a"></div>
<div class="t rh" style="top:388.60px">11</div>
<div class="abs" style="left:2px;top:402.50px;width:25.5px;height:1px;background:#4a4a4a"></div>
<div class="t rh" style="top:407.60px">12</div>
<div class="abs" style="left:2px;top:421.50px;width:25.5px;height:1px;background:#4a4a4a"></div>
<div class="t rh" style="top:426.60px">13</div>
<div class="abs" style="left:2px;top:440.50px;width:25.5px;height:1px;background:#4a4a4a"></div>
<div class="t rh" style="top:445.60px">14</div>
<div class="abs" style="left:2px;top:459.50px;width:25.5px;height:1px;background:#4a4a4a"></div>
<div class="t rh" style="top:464.60px">15</div>
<div class="abs" style="left:2px;top:478.50px;width:25.5px;height:1px;background:#4a4a4a"></div>
<div class="t rh" style="top:483.60px">16</div>
<div class="abs" style="left:2px;top:497.50px;width:25.5px;height:1px;background:#4a4a4a"></div>
<div class="t rh" style="top:502.60px">17</div>
<div class="t cell" style="left:108.3px;top:215.90px;font-weight:bold;color:#0b1f5f;transform:scaleX(0.928)">RICE Framework Score Template</div>
<div class="abs" style="left:105px;top:231.1px;width:707px;height:1.9px;background:#0b1f5f"></div>
<div class="abs" style="left:105px;top:251.20px;width:707px;height:19px;background:#0b1f5f"></div>
<div class="t cell hd" style="left:107.9px;top:255.20px;transform:scaleX(0.844)">#</div>
<div class="abs fb" style="left:135.1px;top:253.30px"><svg width="15" height="14.5" viewBox="0 0 15 14.5"><polygon points="2.4,4.8 12.6,4.8 7.5,10.4" fill="#8a8585"/></svg></div>
<div class="t cell hd" style="left:154.1px;top:255.20px;transform:scaleX(0.911)">Feature</div>
<div class="abs fb" style="left:261.1px;top:253.30px"><svg width="15" height="14.5" viewBox="0 0 15 14.5"><polygon points="2.4,4.8 12.6,4.8 7.5,10.4" fill="#8a8585"/></svg></div>
<div class="t cell hd" style="left:280.0px;top:255.20px;transform:scaleX(0.937)">Reach (1-10)</div>
<div class="abs fb" style="left:368.1px;top:253.30px"><svg width="15" height="14.5" viewBox="0 0 15 14.5"><polygon points="2.4,4.8 12.6,4.8 7.5,10.4" fill="#8a8585"/></svg></div>
<div class="t cell hd" style="left:387.0px;top:255.20px;transform:scaleX(0.935)">Impact (1-10)</div>
<div class="abs fb" style="left:475.1px;top:253.30px"><svg width="15" height="14.5" viewBox="0 0 15 14.5"><polygon points="2.4,4.8 12.6,4.8 7.5,10.4" fill="#8a8585"/></svg></div>
<div class="t cell hd" style="left:494.1px;top:255.20px;transform:scaleX(0.918)">Confidence %</div>
<div class="abs fb" style="left:582.1px;top:253.30px"><svg width="15" height="14.5" viewBox="0 0 15 14.5"><polygon points="2.4,4.8 12.6,4.8 7.5,10.4" fill="#8a8585"/></svg></div>
<div class="t cell hd" style="left:600.8px;top:255.20px;transform:scaleX(0.910)">Effort (1-10)</div>
<div class="abs fb" style="left:689.1px;top:253.30px"><svg width="15" height="14.5" viewBox="0 0 15 14.5"><polygon points="2.4,4.8 12.6,4.8 7.5,10.4" fill="#8a8585"/></svg></div>
<div class="t cell hd" style="left:707.8px;top:255.20px;transform:scaleX(0.876)">RICE Score</div>
<div class="abs fb" style="left:795.1px;top:253.30px"><svg width="15" height="14.5" viewBox="0 0 15 14.5"><polygon points="2.4,4.8 12.6,4.8 7.5,10.4" fill="#8a8585"/></svg></div>
<div class="abs" style="left:705.1px;top:270px;width:106.7px;height:260px;background:#dcdcdc"></div>
<div class="abs gl" style="left:105px;top:269.7px;width:707px;height:1px"></div>
<div class="abs gl" style="left:105px;top:288.7px;width:707px;height:1px"></div>
<div class="abs gl" style="left:105px;top:307.7px;width:707px;height:1px"></div>
<div class="abs gl" style="left:105px;top:326.7px;width:707px;height:1px"></div>
<div class="abs gl" style="left:105px;top:345.7px;width:707px;height:1px"></div>
<div class="abs gl" style="left:105px;top:364.7px;width:707px;height:1px"></div>
<div class="abs gl" style="left:105px;top:383.7px;width:707px;height:1px"></div>
<div class="abs gl" style="left:105px;top:402.7px;width:707px;height:1px"></div>
<div class="abs gl" style="left:105px;top:421.7px;width:707px;height:1px"></div>
<div class="abs gl" style="left:105px;top:440.7px;width:707px;height:1px"></div>
<div class="abs gl" style="left:105px;top:459.7px;width:707px;height:1px"></div>
<div class="abs gl" style="left:105px;top:478.7px;width:707px;height:1px"></div>
<div class="abs gl" style="left:105px;top:497.7px;width:707px;height:1px"></div>
<div class="abs gl" style="left:105px;top:516.7px;width:707px;height:1px"></div>
<div class="abs gl" style="left:104.8px;top:270px;width:1px;height:260px"></div>
<div class="abs gl" style="left:150.8px;top:270px;width:1px;height:260px"></div>
<div class="abs gl" style="left:276.8px;top:270px;width:1px;height:260px"></div>
<div class="abs gl" style="left:383.8px;top:270px;width:1px;height:260px"></div>
<div class="abs gl" style="left:490.8px;top:270px;width:1px;height:260px"></div>
<div class="abs gl" style="left:597.8px;top:270px;width:1px;height:260px"></div>
<div class="abs gl" style="left:704.8px;top:270px;width:1px;height:260px"></div>
<div class="abs gl" style="left:810.8px;top:270px;width:1px;height:260px"></div>
<div class="t cell" style="left:107.7px;top:273.60px">1</div>
<div class="t cell" style="left:153.9px;top:273.60px">Dark mode</div>
<div class="t cell" style="left:279.8px;top:273.60px">10</div>
<div class="abs" style="left:386.2px;top:271.90px;width:51.6px;height:15.2px;background:#628dc9"></div>
<div class="t cell r" style="right:615.2px;top:273.60px">5</div>
<svg class="abs" style="left:492px;top:271.60px" width="16" height="16" viewBox="-8 -8 16 16"><circle r="6.4" fill="#fff" stroke="#1c1c1c" stroke-width="1.2"/><path d="M0,-6.4 A6.4,6.4 0 0 1 0,6.4 Z" fill="#000"/></svg>
<div class="t cell r" style="right:508.5px;top:273.60px">50%</div>
<div class="abs" style="left:600px;top:271.90px;width:41.7px;height:15.2px;background:linear-gradient(90deg,#ff555a,#ffe3e3);border:1px solid #f1636b"></div>
<div class="t cell r" style="right:400.9px;top:273.60px">4</div>
<div class="t cell r" style="right:294.5px;top:273.60px;font-weight:bold;text-decoration:underline;color:#3c3c3c">6,25</div>
<div class="t cell" style="left:107.7px;top:292.60px">2</div>
<div class="t cell" style="left:153.9px;top:292.60px">HubSpot integration</div>
<div class="t cell" style="left:279.8px;top:292.60px">10</div>
<div class="abs" style="left:386.2px;top:290.90px;width:61.6px;height:15.2px;background:#628dc9"></div>
<div class="t cell r" style="right:615.2px;top:292.60px">6</div>
<svg class="abs" style="left:492px;top:290.60px" width="16" height="16" viewBox="-8 -8 16 16"><circle r="6.4" fill="#fff" stroke="#1c1c1c" stroke-width="1.2"/><path d="M0,0 L0,-6.4 A6.4,6.4 0 0 1 6.4,0 Z" fill="#000"/></svg>
<div class="t cell r" style="right:508.5px;top:292.60px">20%</div>
<div class="abs" style="left:600px;top:290.90px;width:30.8px;height:15.2px;background:linear-gradient(90deg,#ff555a,#ffe3e3);border:1px solid #f1636b"></div>
<div class="t cell r" style="right:400.9px;top:292.60px">3</div>
<div class="t cell r" style="right:294.5px;top:292.60px;font-weight:bold;text-decoration:underline;color:#3c3c3c">4,00</div>
<div class="t cell" style="left:107.7px;top:311.60px">3</div>
<div class="t cell" style="left:153.9px;top:311.60px">SSO login</div>
<div class="t cell" style="left:279.8px;top:311.60px">5</div>
<div class="abs" style="left:386.2px;top:309.90px;width:20.8px;height:15.2px;background:#628dc9"></div>
<div class="t cell r" style="right:615.2px;top:311.60px">2</div>
<svg class="abs" style="left:492px;top:309.60px" width="16" height="16" viewBox="-8 -8 16 16"><circle r="6.4" fill="#fff" stroke="#1c1c1c" stroke-width="1.2"/><path d="M0,0 L0,-6.4 A6.4,6.4 0 1 1 -6.4,0 Z" fill="#000"/></svg>
<div class="t cell r" style="right:508.5px;top:311.60px">75%</div>
<div class="abs" style="left:600px;top:309.90px;width:82.8px;height:15.2px;background:linear-gradient(90deg,#ff555a,#ffe3e3);border:1px solid #f1636b"></div>
<div class="t cell r" style="right:400.9px;top:311.60px">8</div>
<div class="t cell r" style="right:294.5px;top:311.60px;font-weight:bold;text-decoration:underline;color:#3c3c3c">0,94</div>
<div class="t cell" style="left:107.7px;top:330.60px">4</div>
<div class="t cell" style="left:279.8px;top:330.60px">0</div>
<div class="t cell r" style="right:615.2px;top:330.60px">0</div>
<svg class="abs" style="left:492px;top:328.60px" width="16" height="16" viewBox="-8 -8 16 16"><circle r="6.4" fill="#fff" stroke="#1c1c1c" stroke-width="1.2"/></svg>
<div class="t cell r" style="right:508.5px;top:330.60px">0%</div>
<div class="t cell r" style="right:400.9px;top:330.60px">0</div>
<div class="t cell" style="left:107.7px;top:349.60px">5</div>
<div class="t cell" style="left:279.8px;top:349.60px">0</div>
<div class="t cell r" style="right:615.2px;top:349.60px">0</div>
<svg class="abs" style="left:492px;top:347.60px" width="16" height="16" viewBox="-8 -8 16 16"><circle r="6.4" fill="#fff" stroke="#1c1c1c" stroke-width="1.2"/></svg>
<div class="t cell r" style="right:508.5px;top:349.60px">0%</div>
<div class="t cell r" style="right:400.9px;top:349.60px">0</div>
<div class="t cell" style="left:107.7px;top:368.60px">6</div>
<div class="t cell" style="left:279.8px;top:368.60px">0</div>
<div class="t cell r" style="right:615.2px;top:368.60px">0</div>
<svg class="abs" style="left:492px;top:366.60px" width="16" height="16" viewBox="-8 -8 16 16"><circle r="6.4" fill="#fff" stroke="#1c1c1c" stroke-width="1.2"/></svg>
<div class="t cell r" style="right:508.5px;top:368.60px">0%</div>
<div class="t cell r" style="right:400.9px;top:368.60px">0</div>
<div class="t cell" style="left:107.7px;top:387.60px">7</div>
<div class="t cell" style="left:279.8px;top:387.60px">0</div>
<div class="t cell r" style="right:615.2px;top:387.60px">0</div>
<svg class="abs" style="left:492px;top:385.60px" width="16" height="16" viewBox="-8 -8 16 16"><circle r="6.4" fill="#fff" stroke="#1c1c1c" stroke-width="1.2"/></svg>
<div class="t cell r" style="right:508.5px;top:387.60px">0%</div>
<div class="t cell r" style="right:400.9px;top:387.60px">0</div>
<div class="t cell" style="left:107.7px;top:406.60px">8</div>
<div class="t cell" style="left:279.8px;top:406.60px">0</div>
<div class="t cell r" style="right:615.2px;top:406.60px">0</div>
<svg class="abs" style="left:492px;top:404.60px" width="16" height="16" viewBox="-8 -8 16 16"><circle r="6.4" fill="#fff" stroke="#1c1c1c" stroke-width="1.2"/></svg>
<div class="t cell r" style="right:508.5px;top:406.60px">0%</div>
<div class="t cell r" style="right:400.9px;top:406.60px">0</div>
<div class="t cell" style="left:107.7px;top:425.60px">9</div>
<div class="t cell" style="left:279.8px;top:425.60px">0</div>
<div class="t cell r" style="right:615.2px;top:425.60px">0</div>
<svg class="abs" style="left:492px;top:423.60px" width="16" height="16" viewBox="-8 -8 16 16"><circle r="6.4" fill="#fff" stroke="#1c1c1c" stroke-width="1.2"/></svg>
<div class="t cell r" style="right:508.5px;top:425.60px">0%</div>
<div class="t cell r" style="right:400.9px;top:425.60px">0</div>
<div class="t cell" style="left:107.7px;top:444.60px">10</div>
<div class="t cell" style="left:279.8px;top:444.60px">0</div>
<div class="t cell r" style="right:615.2px;top:444.60px">0</div>
<svg class="abs" style="left:492px;top:442.60px" width="16" height="16" viewBox="-8 -8 16 16"><circle r="6.4" fill="#fff" stroke="#1c1c1c" stroke-width="1.2"/></svg>
<div class="t cell r" style="right:508.5px;top:444.60px">0%</div>
<div class="t cell r" style="right:400.9px;top:444.60px">0</div>
<div class="t cell" style="left:107.7px;top:463.60px">11</div>
<div class="t cell" style="left:279.8px;top:463.60px">0</div>
<div class="t cell r" style="right:615.2px;top:463.60px">0</div>
<svg class="abs" style="left:492px;top:461.60px" width="16" height="16" viewBox="-8 -8 16 16"><circle r="6.4" fill="#fff" stroke="#1c1c1c" stroke-width="1.2"/></svg>
<div class="t cell r" style="right:508.5px;top:463.60px">0%</div>
<div class="t cell r" style="right:400.9px;top:463.60px">0</div>
<div class="t cell" style="left:107.7px;top:482.60px">12</div>
<div class="t cell" style="left:279.8px;top:482.60px">0</div>
<div class="t cell r" style="right:615.2px;top:482.60px">0</div>
<svg class="abs" style="left:492px;top:480.60px" width="16" height="16" viewBox="-8 -8 16 16"><circle r="6.4" fill="#fff" stroke="#1c1c1c" stroke-width="1.2"/></svg>
<div class="t cell r" style="right:508.5px;top:482.60px">0%</div>
<div class="t cell r" style="right:400.9px;top:482.60px">0</div>
<div class="t cell" style="left:107.7px;top:501.60px">13</div>
<div class="t cell" style="left:279.8px;top:501.60px">0</div>
<div class="t cell r" style="right:615.2px;top:501.60px">0</div>
<svg class="abs" style="left:492px;top:499.60px" width="16" height="16" viewBox="-8 -8 16 16"><circle r="6.4" fill="#fff" stroke="#1c1c1c" stroke-width="1.2"/></svg>
<div class="t cell r" style="right:508.5px;top:501.60px">0%</div>
<div class="t cell r" style="right:400.9px;top:501.60px">0</div>
<div class="abs" style="left:810.8px;top:250.2px;width:80.8px;height:21px;border:2px solid #1e7145;background:#fff"></div>
<div class="abs" style="left:887.6px;top:267.4px;width:6px;height:6px;background:#1e7145;border:1px solid #fff"></div>
<div class="abs" style="left:1087px;top:167.5px;width:16px;height:347px;background:#2b2b2b"></div>
<div class="abs" style="left:1087.4px;top:168.2px;width:14.4px;height:3.2px;background:#e9e9e9"></div>
<div class="abs" style="left:1091px;top:174px;width:9.2px;height:186px;border-radius:4.6px;background:#6a6a6a"></div>
</div></div>
<div class="abs" style="left:2px;top:514px;width:1081.6px;height:15.6px;background:#2b2b2b"></div>
<div class="abs" style="left:4.2px;top:518px;width:963px;height:8.8px;border-radius:4.4px;background:#696969"></div>
<div class="abs" style="left:1083.6px;top:514px;width:3.6px;height:15.4px;background:#fff"></div>
<div class="abs" style="left:1087px;top:514px;width:16px;height:15.4px;background:#2b2b2b"></div>
<div class="abs" style="left:2px;top:529.4px;width:1100px;height:26px;background:#323232"></div>
<div class="abs" style="left:2px;top:529.1px;width:1100px;height:0.9px;background:#585858"></div>
<svg class="abs" style="left:14px;top:535px" width="36" height="16" viewBox="0 0 36 16"><polygon points="10.2,3 10.2,13 2.8,8" fill="#5c5c5c"/><polygon points="26,3 26,13 33.4,8" fill="#5c5c5c"/></svg>
<div class="abs" style="left:62.5px;top:530px;width:100.5px;height:23.6px;background:#252525"></div>
<div class="abs" style="left:62.0px;top:530px;width:1px;height:21px;background:#5a5a5a"></div>
<div class="t" style="left:79.8px;top:536.1px;font-size:12.6px;color:#8c8c8c;transform:scaleX(1.000);transform-origin:0 50%;">Instructions</div>
<div class="abs" style="left:163px;top:529.3px;width:116.3px;height:21.3px;background:#fff;border-radius:0 0 1.5px 1.5px"></div>
<div class="t" style="left:180.6px;top:536.1px;font-size:12.6px;color:#1d8a52;font-weight:bold;transform:scaleX(0.951);transform-origin:0 50%;">Scoring Sheet</div>
<div class="abs" style="left:282.6px;top:531.7px;width:75px;height:20px;background:#000"></div>
<div class="t" style="left:296.4px;top:536.1px;font-size:12.6px;color:#f4f4f4;transform:scaleX(0.957);transform-origin:0 50%;">Scales &gt;</div>
<div class="abs" style="left:360.2px;top:530px;width:1px;height:21px;background:#5a5a5a"></div>
<div class="t" style="left:382.6px;top:536.1px;font-size:12.6px;color:#7c7c7c;transform:scaleX(0.955);transform-origin:0 50%;">Reach</div>
<div class="abs" style="left:438.9px;top:530px;width:1px;height:21px;background:#5a5a5a"></div>
<div class="t" style="left:460.0px;top:536.1px;font-size:12.6px;color:#7c7c7c;transform:scaleX(0.994);transform-origin:0 50%;">Impact</div>
<div class="abs" style="left:518.1px;top:530px;width:1px;height:21px;background:#5a5a5a"></div>
<div class="t" style="left:536.2px;top:536.1px;font-size:12.6px;color:#7c7c7c;transform:scaleX(0.979);transform-origin:0 50%;">Confidence</div>
<div class="abs" style="left:616.6px;top:530px;width:79px;height:22.6px;background:#242424;border-radius:0 0 2px 2px"></div>
<div class="abs" style="left:616.1px;top:530px;width:1px;height:21px;background:#5a5a5a"></div>
<div class="t" style="left:641.0px;top:536.1px;font-size:12.6px;color:#8c8c8c;transform:scaleX(1.004);transform-origin:0 50%;">Effort</div>
<div class="abs" style="left:695.1px;top:530px;width:1px;height:21px;background:#5a5a5a"></div>
<svg class="abs" style="left:708px;top:535px" width="14" height="14" viewBox="0 0 14 14" stroke="#d6d6d6" stroke-width="1.7"><path d="M7.1,1.8 V12 M2,6.9 H12.2"/></svg>
<div class="abs" style="left:733.2px;top:530px;width:1px;height:21px;background:#5a5a5a"></div>
<div class="abs" style="left:2px;top:554.8px;width:1100px;height:1.2px;background:#141414"></div>
<div class="abs" style="left:2px;top:556px;width:1100px;height:24px;background:linear-gradient(#464646,#3f3f3f)"></div>
<div class="t" style="left:26.8px;top:560.5px;font-size:12.6px;color:#e2e2e2;transform:scaleX(0.933);transform-origin:0 50%;">Ready</div>
<div class="t" style="left:82.6px;top:560.5px;font-size:12.6px;color:#e2e2e2;transform:scaleX(0.982);transform-origin:0 50%;">Calculate</div>
<svg class="abs" style="left:153px;top:558px" width="18" height="18" viewBox="0 0 18 18" fill="none" stroke="#e2e2e2" stroke-width="1.05" stroke-linejoin="round" stroke-linecap="round"><circle cx="7.3" cy="2.8" r="1.9"/><path d="M5.4,5.2 L2.8,3.8 Q1.6,3.4 1.3,4.5 Q1.1,5.6 2.2,6 L5,7.2 V9.8 L3.2,14.6 Q3,15.8 4,15.9 Q4.9,15.9 5.3,15 L7.3,10.8 L8.6,13.2 M9.6,7.2 L12.4,6 Q13.5,5.6 13.3,4.5 Q13,3.4 11.8,3.8 L9.2,5.2"/><path d="M9.4,9.2 L15.8,15.8 M15.6,9.4 L9.2,15.8" stroke-width="1.1"/></svg>
<div class="t" style="left:173.2px;top:560.5px;font-size:12.6px;color:#e2e2e2;transform:scaleX(1.009);transform-origin:0 50%;">Accessibility: Investigate</div>
<div class="abs" style="left:782.6px;top:556px;width:37.6px;height:24px;background:#585858"></div>
<svg class="abs" style="left:794px;top:559px" width="16" height="16" viewBox="0 0 16 16" fill="none" stroke="#e2e2e2" stroke-width="1.1"><rect x="1.2" y="1.2" width="13.2" height="13.2"/><path d="M5.6,1.2 V14.4 M10,1.2 V14.4 M1.2,5.6 H14.4 M1.2,10 H14.4"/></svg>
<svg class="abs" style="left:829px;top:559px" width="16" height="16" viewBox="0 0 16 16" fill="none" stroke="#e2e2e2" stroke-width="1.1"><rect x="1.4" y="1.2" width="13.2" height="13.2"/><rect x="4.2" y="4" width="7.6" height="7.6"/><path d="M5.6,6.4 H10.4 M5.6,8.8 H10.4"/></svg>
<svg class="abs" style="left:865px;top:559px" width="16" height="16" viewBox="0 0 16 16" fill="none" stroke="#e2e2e2" stroke-width="1.1"><rect x="1.4" y="1.2" width="13.2" height="13.2"/><path d="M5.8,1.2 V8 H10.6 V1.2"/></svg>
<div class="abs" style="left:899.2px;top:565.2px;width:7.8px;height:1.9px;background:#f0f0f0"></div>
<div class="abs" style="left:914.6px;top:564.2px;width:99px;height:4px;border-radius:2px;background:#6c6c6c"></div>
<div class="abs" style="left:958.8px;top:558.2px;width:15.8px;height:15.8px;border-radius:50%;background:#a3a3a3"></div>
<div class="abs" style="left:1021px;top:565.2px;width:8.4px;height:1.9px;background:#f0f0f0"></div>
<div class="abs" style="left:1024.25px;top:562px;width:1.9px;height:8.4px;background:#f0f0f0"></div>
<div class="t" style="left:1046.2px;top:560.5px;font-size:12.6px;color:#e2e2e2;transform:scaleX(0.956);transform-origin:0 50%;">120%</div>
</div></div>
</body></html>
